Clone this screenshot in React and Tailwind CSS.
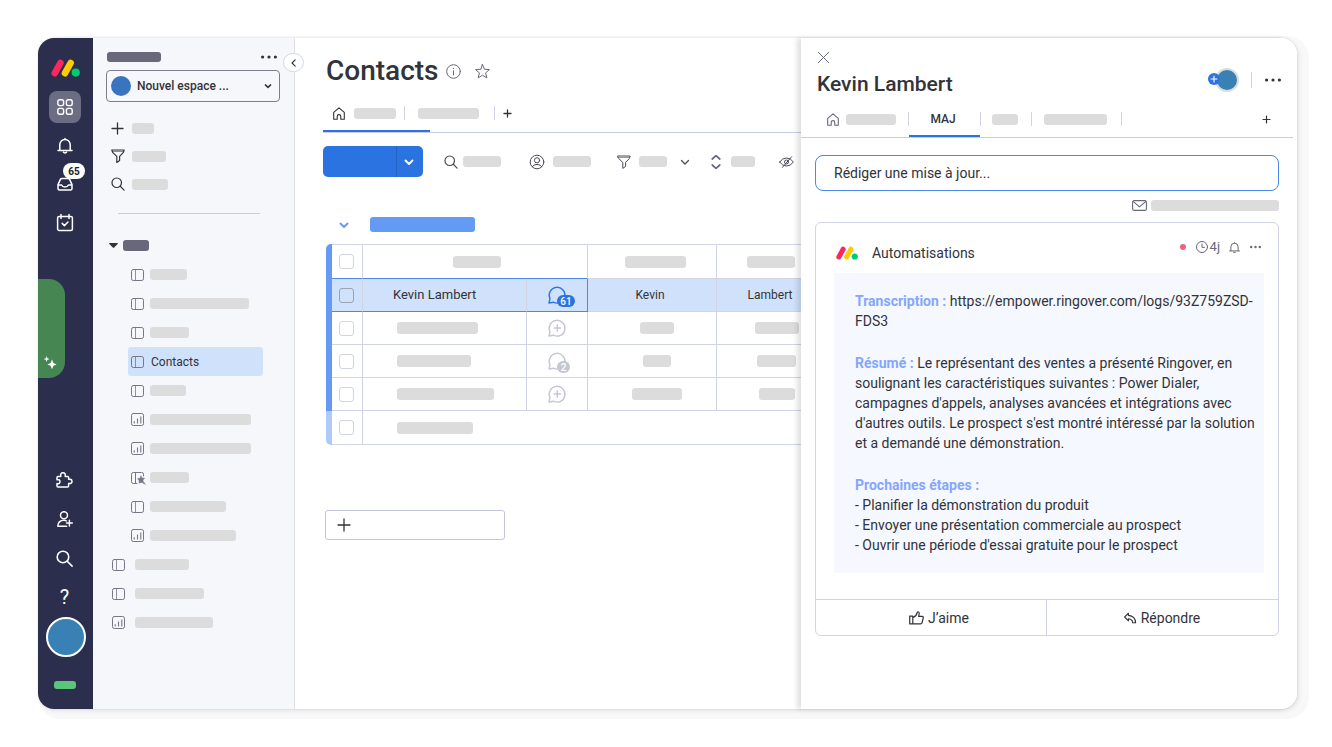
import React, { useState } from "react";
import clsx from "clsx";

// Base for every line icon, paths are drawn in real pixels
const Icon = ({ w = 16, h = 16, stroke = 1.3, className, children }) => (
  <svg
    width={w}
    height={h}
    viewBox={`0 0 ${w} ${h}`}
    fill="none"
    stroke="currentColor"
    strokeWidth={stroke}
    strokeLinecap="round"
    strokeLinejoin="round"
    aria-hidden="true"
    className={clsx("shrink-0 overflow-visible", className)}
  >
    {children}
  </svg>
);

const Logo = ({ className }) => (
  <svg viewBox="0 0 29 18" fill="none" strokeLinecap="round" strokeWidth="6.6" aria-hidden="true" className={className}>
    <path d="M3.8 14.2 9.4 4" stroke="#fb275d" />
    <path d="M14 14.2 19.6 4" stroke="#ffcc00" />
    <circle cx="24.7" cy="13.6" r="4.1" fill="#00ca72" />
  </svg>
);

const PlusIcon = ({ size = 13, stroke = 1.3 }) => (
  <Icon w={size} h={size} stroke={stroke}>
    <path d={`M${size / 2} 1V${size - 1}M1 ${size / 2}H${size - 1}`} />
  </Icon>
);

const SearchIcon = ({ size = 14, stroke = 1.2 }) => (
  <Icon w={size} h={size} stroke={stroke}>
    <circle cx={size * 0.41} cy={size * 0.41} r={size * 0.34} />
    <path d={`M${size * 0.66} ${size * 0.66} ${size - 0.9} ${size - 0.9}`} />
  </Icon>
);

const FilterIcon = ({ stroke = 1.3 }) => (
  <Icon w={14} h={14} stroke={stroke}>
    <path d="M.8 1H13.2L12.4 3.4 8.6 7.4V11.4L5.8 13.4V7.4L1.6 3.4Z" />
    <path d="M1.4 2.4H12.6" strokeWidth=".6" />
  </Icon>
);

const ChevronDown = ({ stroke = 1.5 }) => (
  <Icon w={10} h={10} stroke={stroke}>
    <path d="M1.5 3.5 5 7 8.5 3.5" />
  </Icon>
);

const HomeIcon = ({ className }) => (
  <Icon w={12} h={13} stroke={1.1} className={className}>
    <path d="M.7 5.4 6 .8 11.3 5.4V12.2H7.8V9.4A1.8 1.8 0 0 0 4.2 9.4V12.2H.7Z" />
  </Icon>
);

const BellIcon = () => (
  <Icon stroke={1.5}>
    <path d="M1 12.4H15M2.8 12.4V6.6A5.2 5.2 0 0 1 13.2 6.6V12.4M6.4 14.2A1.8 1.4 0 0 0 9.6 14.2M8 1.2V.6" />
  </Icon>
);

const InboxIcon = () => (
  <Icon h={14} stroke={1.5}>
    <path d="M1 7.6 3.4 2.4Q3.8 1.5 4.8 1.5H11.2Q12.2 1.5 12.6 2.4L15 7.6V11.5Q15 13 13.5 13H2.5Q1 13 1 11.5ZM1 8H4.6Q5.4 10 8 10T11.4 8H15" />
  </Icon>
);

const CalendarIcon = () => (
  <Icon h={17} stroke={1.5}>
    <rect x=".6" y="2.6" width="14.8" height="13.8" rx="1.5" />
    <path d="M4 .6V4.4M12 .6V4.4M5.2 9.4 7.4 11.6 11 8" />
  </Icon>
);

const PuzzleIcon = () => (
  <Icon w={17} stroke={1.5}>
    <path d="M1 5.6Q1 4.6 2 4.6H4.8C4.3 2 5.2.8 7 .8S9.7 2 9.2 4.6H11.6Q12.6 4.6 12.6 5.6V7.3C14.4 6.8 16 7.6 16 9.4S14.4 11.9 12.6 11.4V14Q12.6 15 11.6 15H2Q1 15 1 14V11.6C3 12 4 11 4 9.6S3 7.3 1 7.8Z" />
  </Icon>
);

const InviteIcon = () => (
  <Icon stroke={1.5}>
    <circle cx="7" cy="4.3" r="3.5" />
    <path d="M9.4 9.8Q8.4 9.3 7 9.3C3 9.3.8 11.6.8 15.2H9.6M12.4 9.2V15M9.5 12.1H15.3" />
  </Icon>
);

const BoardIcon = () => (
  <Icon w={13} h={12} stroke={1}>
    <rect x=".5" y=".5" width="12" height="11" rx="1.8" />
    <path d="M4.5.5V11.5" strokeWidth=".8" />
  </Icon>
);

const ChartIcon = () => (
  <Icon w={13} h={13} stroke={1}>
    <rect x=".5" y=".5" width="12" height="12" rx="1.8" />
    <path d="M3.2 8.2V10.4M6.5 5.5V10.4M9.8 3.4V10.4" strokeWidth="1.1" strokeLinecap="butt" />
  </Icon>
);

const MagicBoardIcon = () => (
  <Icon w={13} h={12} stroke={1}>
    <path d="M6 11.5H2.3A1.8 1.8 0 0 1 .5 9.7V2.3A1.8 1.8 0 0 1 2.3.5H10.7A1.8 1.8 0 0 1 12.5 2.3V4M4.5.5V11.5" />
    <path d="M10 4 11 6 13.6 6.2 12 8 12.2 9.6 14.4 12.4 11 10.4 8 11 8.2 8.4 6.4 6.8 8.8 6.2Z" fill="currentColor" strokeWidth=".5" />
  </Icon>
);

const DotsIcon = ({ w = 16, r = 1.6 }) => (
  <svg width={w} height="4" viewBox={`0 0 ${w} 4`} fill="currentColor" aria-hidden="true" className="shrink-0">
    <circle cx={r} cy="2" r={r} />
    <circle cx={w / 2} cy="2" r={r} />
    <circle cx={w - r} cy="2" r={r} />
  </svg>
);

// Speech bubble of the updates column
const BubbleIcon = ({ plus }) => (
  <Icon w={18} h={18} stroke={1.4}>
    <path d="M1 17 2 12.7A7.9 7.9 0 1 1 5.4 16.2L1 17Z" />
    {plus && <path d="M9.3 5.8V12.2M6.1 9H12.5" />}
  </Icon>
);

const Bar = ({ className, color = "bg-[#dcdcdc]" }) => (
  <span className={clsx("block shrink-0 rounded-[3px]", color, className)} />
);

const Separator = ({ className, height = "h-[14px]" }) => (
  <span className={clsx("w-px shrink-0 bg-[#d0d4e4]", height, className)} />
);

const RailButton = ({ label, children, className }) => (
  <button
    type="button"
    aria-label={label}
    className={clsx("relative flex h-[38px] w-full items-center justify-center pr-0.5", className)}
  >
    {children}
  </button>
);

const Rail = () => (
  <nav className="flex w-[55px] shrink-0 flex-col items-center rounded-l-2xl bg-[#2b2e4c] pt-[21px] pb-5 text-white">
    <Logo className="h-[18px] w-[29px]" />
    <button
      type="button"
      aria-label="Espaces"
      className="mt-[14px] mr-0.5 flex h-8 w-8 items-center justify-center rounded-lg bg-[#6b6d82]"
    >
      <Icon stroke={1.4}>
        <rect x=".8" y=".8" width="5.8" height="5.8" rx="1.8" />
        <rect x="9.4" y=".8" width="5.8" height="5.8" rx="1.8" />
        <rect x=".8" y="9.4" width="5.8" height="5.8" rx="1.8" />
        <rect x="9.4" y="9.4" width="5.8" height="5.8" rx="1.8" />
      </Icon>
    </button>
    <div className="mt-1 w-full">
      <RailButton label="Notifications">
        <BellIcon />
      </RailButton>
      <RailButton label="Boîte de réception">
        <InboxIcon />
        <span className="absolute -top-0.5 right-2 flex h-4 w-[22px] items-center justify-center rounded-full bg-white text-[10px] font-bold text-[#222]">
          65
        </span>
      </RailButton>
      <RailButton label="Mon travail">
        <CalendarIcon />
      </RailButton>
    </div>
    <button
      type="button"
      aria-label="Assistant"
      className="mt-[38px] flex h-[99px] w-[27px] items-end justify-center self-start rounded-r-2xl bg-[#468653] pr-1 pb-2"
    >
      <svg width="14" height="14" viewBox="0 0 14 14" fill="white" aria-hidden="true" className="shrink-0">
        <path d="M3.6 0 4.4 2.2 6.6 3 4.4 3.8 3.6 6 2.8 3.8.6 3 2.8 2.2ZM9 3.6 10.4 7 13.6 8.4 10.4 9.8 9 13.2 7.6 9.8 4.4 8.4 7.6 7Z" />
      </svg>
    </button>
    <div className="mt-auto flex w-full flex-col gap-px">
      <RailButton label="Applications">
        <PuzzleIcon />
      </RailButton>
      <RailButton label="Inviter">
        <InviteIcon />
      </RailButton>
      <RailButton label="Rechercher">
        <SearchIcon size={17} stroke={1.6} />
      </RailButton>
      <RailButton label="Aide" className="text-xl">
        ?
      </RailButton>
    </div>
    <button type="button" aria-label="Profil" className="mt-px h-10 w-10 rounded-full border-2 border-white bg-[#3980b5]" />
    <span className="mt-6 mr-0.5 h-2 w-[22px] rounded-[3px] bg-[#5bc57b]" />
  </nav>
);

const boards = [
  { icon: BoardIcon, width: "w-[37px]" },
  { icon: BoardIcon, width: "w-[99px]" },
  { icon: BoardIcon, width: "w-[39px]" },
  { icon: BoardIcon, name: "Contacts" },
  { icon: BoardIcon, width: "w-[36px]" },
  { icon: ChartIcon, width: "w-[101px]" },
  { icon: ChartIcon, width: "w-[101px]" },
  { icon: MagicBoardIcon, width: "w-[39px]" },
  { icon: BoardIcon, width: "w-[76px]" },
  { icon: ChartIcon, width: "w-[86px]" },
];

const rootBoards = [
  { icon: BoardIcon, width: "w-[54px]" },
  { icon: BoardIcon, width: "w-[69px]" },
  { icon: ChartIcon, width: "w-[78px]" },
];

const Sidebar = () => (
  <aside className="relative w-[202px] shrink-0 border-r border-[#e0e1e8] bg-[#f5f7fb] px-[14px] pt-3">
    <div className="flex h-[14px] items-center justify-between pr-[3px] text-[#323338]">
      <Bar className="h-[10px] w-[54px]" color="bg-[#676879]" />
      <button type="button" aria-label="Options" className="flex">
        <DotsIcon />
      </button>
    </div>
    <button
      type="button"
      aria-label="Réduire"
      className="absolute top-[15px] -right-[10px] z-10 flex h-[19px] w-[21px] items-center justify-center rounded-full border border-[#d5d8e6] bg-white text-[#323338]"
    >
      <Icon w={6} h={8} stroke={1.1}>
        <path d="M4.2.8 1 4 4.2 7.2" />
      </Icon>
    </button>
    <div className="mt-[6px] -ml-px flex h-8 items-center rounded border border-[#7c7e8e] pr-[6px] pl-1 text-[#323338]">
      <span className="h-5 w-5 shrink-0 rounded-full bg-[#3975bf]" />
      <select
        aria-label="Espace de travail"
        className="h-full min-w-0 flex-1 appearance-none bg-transparent pl-[6px] text-xs font-medium"
      >
        <option>Nouvel espace ...</option>
      </select>
      <Icon w={10} h={10} stroke={1.5}>
        <path d="M2.4 3.9 5 6.4 7.6 3.9" />
      </Icon>
    </div>

    <div className="mt-3 pl-1 text-[#323338]">
      <button type="button" aria-label="Ajouter" className="flex h-7 items-center gap-2">
        <PlusIcon />
        <Bar className="h-[11px] w-[22px]" />
      </button>
      <button type="button" aria-label="Filtrer" className="flex h-7 items-center gap-[7px]">
        <FilterIcon stroke={1.2} />
        <Bar className="h-[11px] w-[34px]" />
      </button>
      <button type="button" aria-label="Rechercher un tableau" className="flex h-7 items-center gap-[7px]">
        <SearchIcon />
        <Bar className="h-[11px] w-[36px]" />
      </button>
    </div>
    <hr className="mt-[15px] mr-5 ml-[11px] border-[#cbcdd2]" />

    <button type="button" aria-label="Dossier" className="mt-6 ml-0.5 flex h-[14px] items-center gap-[5px] text-[#323338]">
      <svg width="9" height="5" viewBox="0 0 9 5" fill="currentColor" aria-hidden="true">
        <path d="M.6 0H8.4Q9.2.3 8.6 1L5.2 4.4Q4.5 5 3.8 4.4L.4 1Q-.2.3.6 0Z" />
      </svg>
      <Bar className="h-[11px] w-[26px]" color="bg-[#676879]" />
    </button>
    <ul className="mt-2 pl-[21px] text-[#757686]">
      {boards.map(({ icon: BoardTypeIcon, width, name }, i) => (
        <li key={i}>
          <a
            href="#board"
            aria-label={name ? undefined : "Tableau"}
            className={clsx(
              "flex h-[29px] w-[135px] items-center gap-[6px] rounded-[3px] pl-[3px]",
              name && "bg-[#d0e2fb]"
            )}
          >
            <BoardTypeIcon />
            {name ? (
              <span className="pl-px text-xs text-[#323338]">{name}</span>
            ) : (
              <Bar className={clsx("h-[11px]", width)} />
            )}
          </a>
        </li>
      ))}
    </ul>
    <ul className="pl-[5px] text-[#757686]">
      {rootBoards.map(({ icon: BoardTypeIcon, width }, i) => (
        <li key={i}>
          <a href="#board" aria-label="Tableau" className="flex h-[29px] items-center gap-[10px]">
            <BoardTypeIcon />
            <Bar className={clsx("h-[11px]", width)} />
          </a>
        </li>
      ))}
    </ul>
  </aside>
);

const Toolbar = () => (
  <div className="mt-[13px] flex h-[31px] items-center text-[#4a4b57]">
    <div className="flex h-full w-[100px] shrink-0 overflow-hidden rounded-[5px] bg-[#2c73e2] text-white">
      <button type="button" aria-label="Nouvel élément" className="flex-1" />
      <button
        type="button"
        aria-label="Plus de choix"
        className="flex w-[27px] items-center justify-center border-l border-[#2561c0] pr-0.5"
      >
        <ChevronDown stroke={1.8} />
      </button>
    </div>
    <button type="button" aria-label="Rechercher un contact" className="ml-[21px] flex items-center gap-[5px]">
      <SearchIcon />
      <Bar className="h-[11px] w-[38px]" />
    </button>
    <button type="button" aria-label="Personne" className="ml-7 flex items-center gap-2">
      <Icon stroke={1}>
        <circle cx="8" cy="8" r="6.8" />
        <circle cx="8" cy="6.3" r="2.6" />
        <path d="M3.2 12.8Q4.4 10.4 8 10.4T12.8 12.8" />
      </Icon>
      <Bar className="h-[11px] w-[38px]" />
    </button>
    <button type="button" aria-label="Filtre" className="ml-[26px] flex items-center gap-2">
      <FilterIcon stroke={1} />
      <Bar className="h-[11px] w-[28px]" />
    </button>
    <button type="button" aria-label="Options de filtre" className="ml-[13px]">
      <ChevronDown stroke={1.3} />
    </button>
    <button type="button" aria-label="Trier" className="ml-5 flex items-center gap-[9px]">
      <Icon w={12} stroke={1.7} className="text-[#676879]">
        <path d="M2.2 5 6 1.6 9.8 5M2.2 11 6 14.4 9.8 11" />
      </Icon>
      <Bar className="h-[11px] w-6" />
    </button>
    <button type="button" aria-label="Masquer" className="ml-6">
      <Icon w={15} h={12} stroke={1}>
        <path d="M.6 6Q3.4 2 7.5 2T14.4 6Q11.6 10 7.5 10T.6 6ZM3.4 11.4 12.6.8" />
        <circle cx="7.5" cy="6" r="2" />
      </Icon>
    </button>
  </div>
);

const rows = [
  { name: "Kevin Lambert", first: "Kevin", last: "Lambert", updates: "61", selected: true },
  { bars: ["w-[81px]", "w-[34px]", "w-[44px]"] },
  { bars: ["w-[74px]", "w-[28px]", "w-[39px]"], updates: "2" },
  { bars: ["w-[97px]", "w-[50px]", "w-[36px]"] },
];

const CheckCell = ({ label, selected, blue }) => (
  <td
    className={clsx(
      "border-r border-b border-r-[#d0d4e4] pr-px",
      blue ? "border-b-[#4b88ea]" : "border-b-[#d0d4e4]"
    )}
  >
    <input
      type="checkbox"
      aria-label={label}
      className={clsx(
        "mx-auto block h-[15px] w-[15px] appearance-none rounded-[3px] border",
        selected ? "border-[#9aa3b5]" : "border-[#d0d4e4] bg-white"
      )}
    />
  </td>
);

const ContactsTable = () => (
  <div className="mt-2 ml-[3px] flex">
    <div className="flex w-[6px] shrink-0 flex-col overflow-hidden rounded-l-[5px]">
      <span className="flex-1 bg-[#659af4]" />
      <span className="h-[34px] bg-[#aecafa]" />
    </div>
    <table className="w-[492px] shrink-0 table-fixed border-separate border-spacing-0 border-t border-[#d0d4e4] text-[13px] text-[#323338]">
      <colgroup>
        <col className="w-[31px]" />
        <col className="w-[164px]" />
        <col className="w-[61px]" />
        <col className="w-[129px]" />
        <col className="w-[107px]" />
      </colgroup>
      <tbody>
        <tr className="h-[34px]">
          <CheckCell label="Tout sélectionner" blue />
          <th
            colSpan={2}
            aria-label="Contact"
            className="border-r border-b border-r-[#d0d4e4] border-b-[#4b88ea] pl-1"
          >
            <Bar className="mx-auto h-3 w-[48px]" />
          </th>
          <th aria-label="Prénom" className="border-r border-b border-[#d0d4e4] pl-[6px]">
            <Bar className="mx-auto h-3 w-[61px]" />
          </th>
          <th aria-label="Nom" className="border-b border-[#d0d4e4]">
            <Bar className="mx-auto h-3 w-[48px]" />
          </th>
        </tr>
        {rows.map((row, i) => (
          <tr key={i} className={clsx("h-[33px]", row.selected && "bg-[#d0e2fb]")}>
            <CheckCell label={row.name || "Contact"} selected={row.selected} blue={row.selected} />
            <td
              className={clsx(
                "border-r border-b border-r-[#d0d4e4]",
                row.selected ? "border-b-[#4b88ea] pl-[30px]" : "border-b-[#d0d4e4] pl-[34px]"
              )}
            >
              {row.name || <Bar className={clsx("h-3", row.bars[0])} />}
            </td>
            <td className={clsx("border-r border-b", row.selected ? "border-[#4b88ea]" : "border-[#d0d4e4]")}>
              <button
                type="button"
                aria-label="Mises à jour"
                className={clsx(
                  "relative mx-auto block w-[18px]",
                  row.selected ? "text-[#2c73e2]" : "text-[#c5c7d0]"
                )}
              >
                <BubbleIcon plus={!row.updates} />
                {row.updates && (
                  <span
                    className={clsx(
                      "absolute top-[9px] left-[9px] flex h-3 items-center justify-center rounded-full text-[10px] font-medium text-white",
                      row.selected ? "w-[18px] bg-[#2c73e2]" : "w-[13px] bg-[#c5c7d0]"
                    )}
                  >
                    {row.updates}
                  </span>
                )}
              </button>
            </td>
            <td
              className={clsx(
                "border-r border-b border-[#d0d4e4] text-center text-xs",
                row.selected ? "pr-1" : "pl-[10px]"
              )}
            >
              {row.first || <Bar className={clsx("mx-auto h-3", row.bars[1])} />}
            </td>
            <td className={clsx("border-b border-[#d0d4e4] text-center text-xs", row.selected ? "pr-px" : "pl-3")}>
              {row.last || <Bar className={clsx("mx-auto h-3", row.bars[2])} />}
            </td>
          </tr>
        ))}
        <tr className="h-[34px]">
          <CheckCell label="Ajouter un contact" />
          <td colSpan={4} className="border-b border-[#d0d4e4] pl-[34px]">
            <Bar className="h-3 w-[76px]" />
          </td>
        </tr>
      </tbody>
    </table>
  </div>
);

const Board = () => (
  <main className="min-w-0 flex-1 overflow-hidden bg-white pt-3 pl-7 text-[#323338]">
    <div className="flex h-[42px] items-center pl-[3px]">
      <h1 className="text-[28px] font-medium">Contacts</h1>
      <button type="button" aria-label="Informations" className="ml-[7px] text-[#676879]">
        <Icon w={15} h={15} stroke={1}>
          <circle cx="7.5" cy="7.5" r="6.8" />
          <path d="M7.5 6.7V10.9M7.5 4.3V4.6" />
        </Icon>
      </button>
      <button type="button" aria-label="Favori" className="ml-[14px] text-[#676879]">
        <Icon w={15} h={15} stroke={1}>
          <path d="M7.5.6 9.4 5.2 14.4 5.6 10.6 8.9 11.8 13.9 7.5 11.2 3.2 13.9 4.4 8.9.6 5.6 5.6 5.2Z" />
        </Icon>
      </button>
    </div>
    <div className="relative mt-0.5 flex h-[39px] items-center border-b border-[#c8cde2]">
      <button type="button" aria-label="Tableau principal" className="flex items-center gap-[9px] pl-[10px]">
        <HomeIcon />
        <Bar className="h-[11px] w-[42px]" />
      </button>
      <Separator className="ml-2" />
      <button type="button" aria-label="Vue" className="ml-[13px]">
        <Bar className="h-[11px] w-[61px]" />
      </button>
      <Separator className="ml-[15px]" />
      <button type="button" aria-label="Ajouter une vue" className="ml-2">
        <PlusIcon size={9} />
      </button>
      <span className="absolute bottom-0 left-0 h-[2px] w-[107px] bg-[#2c73e2]" />
    </div>
    <Toolbar />
    <div className="mt-[35px] flex h-6 items-center pl-4">
      <button type="button" aria-label="Réduire le groupe" className="pt-0.5 text-[#659af4]">
        <ChevronDown stroke={1.9} />
      </button>
      <Bar className="ml-[21px] h-[15px] w-[105px]" color="bg-[#659af4]" />
    </div>
    <ContactsTable />
    <button
      type="button"
      aria-label="Ajouter un groupe"
      className="mt-[65px] ml-0.5 flex h-[30px] w-[180px] items-center rounded-[3px] border border-[#c3c6d4] pl-[11px]"
    >
      <PlusIcon size={14} />
    </button>
  </main>
);

const PanelHeader = () => (
  <header className="pt-3 pl-4">
    <button type="button" aria-label="Fermer" className="flex h-[14px] items-center text-[#676879]">
      <Icon w={13} h={13} stroke={1}>
        <path d="M1.2 1.2 11.8 11.8M11.8 1.2 1.2 11.8" />
      </Icon>
    </button>
    <div className="mt-1 flex h-[33px] justify-between pr-4">
      <h2 className="text-[21px] leading-[33px] font-medium">Kevin Lambert</h2>
      <div className="flex h-6 items-center">
        <button
          type="button"
          aria-label="Abonnés"
          className="relative h-6 w-6 rounded-full border-2 border-[#dcdcdc] bg-[#3980b5]"
        >
          <span className="absolute top-[3px] -left-[9px] flex h-3 w-3 items-center justify-center rounded-full bg-[#2c73e2] text-white">
            <PlusIcon size={8} stroke={1.1} />
          </span>
        </button>
        <Separator className="ml-3" height="h-4" />
        <button type="button" aria-label="Autres actions" className="ml-[13px] flex">
          <DotsIcon />
        </button>
      </div>
    </div>
  </header>
);

const PanelTabs = () => (
  <div className="mr-1 flex h-[37px] items-center border-b border-[#c8cde2] pl-[26px]">
    <button type="button" aria-label="Accueil" className="flex items-center gap-[7px]">
      <HomeIcon className="text-[#676879]" />
      <Bar className="h-[11px] w-[50px]" />
    </button>
    <Separator className="ml-3" />
    <button type="button" className="relative flex h-full w-[71px] items-center justify-center pr-[3px] text-xs font-medium">
      MAJ
      <span className="absolute inset-x-0 bottom-0 h-[2px] bg-[#2c73e2]" />
    </button>
    <Separator />
    <button type="button" aria-label="Fichiers" className="ml-[11px]">
      <Bar className="h-[11px] w-[26px]" />
    </button>
    <Separator className="ml-[13px]" />
    <button type="button" aria-label="Journal d'activité" className="ml-3">
      <Bar className="h-[11px] w-[63px]" />
    </button>
    <Separator className="ml-[14px]" />
    <button type="button" aria-label="Ajouter un onglet" className="mr-[22px] ml-auto">
      <PlusIcon size={9} stroke={1.2} />
    </button>
  </div>
);

const UpdateCard = () => (
  <article className="mt-[10px] rounded-md border border-[#d0d4e4]">
    <div className="flex h-[50px] items-start justify-between pt-[17px] pr-[17px] pl-5">
      <div className="mt-[3px] flex h-5 items-center gap-[14px]">
        <Logo className="h-[14px] w-[22px]" />
        <h3 className="text-sm">Automatisations</h3>
      </div>
      <div className="flex h-[14px] items-center text-[#676879]">
        <span className="h-[6px] w-[6px] rounded-full bg-[#ea647d]" />
        <Icon w={12} h={12} stroke={1} className="ml-[10px]">
          <circle cx="6" cy="6" r="5.5" />
          <path d="M6 3V6.4H8.4" />
        </Icon>
        <span className="ml-0.5 text-[13px]">4j</span>
        <button type="button" aria-label="Rappel" className="ml-[9px]">
          <Icon w={11} h={11} stroke={1}>
            <path d="M.6 8.9H10.4M1.9 8.9V4.8A3.6 3.6 0 0 1 9.1 4.8V8.9M4.6 10.3H6.4M5.5 1V.6" />
          </Icon>
        </button>
        <button type="button" aria-label="Plus" className="ml-[10px] flex">
          <DotsIcon w={11} r={1.2} />
        </button>
      </div>
    </div>
    <div className="mr-[14px] mb-[26px] ml-[18px] flex flex-col gap-[22px] bg-[#f5f8ff] py-[18px] pr-2 pl-[21px] text-sm leading-5">
      <p>
        <strong className="font-bold text-[#85a6fb]">Transcription :</strong>{" "}
        https://empower.ringover.com/logs/93Z759ZSD-FDS3
      </p>
      <p>
        <strong className="font-bold text-[#85a6fb]">Résumé :</strong> Le représentant des ventes a présenté Ringover,
        en soulignant les caractéristiques suivantes : Power Dialer, campagnes d'appels, analyses avancées et
        intégrations avec d'autres outils. Le prospect s'est montré intéressé par la solution et a demandé une
        démonstration.
      </p>
      <div>
        <strong className="font-bold text-[#85a6fb]">Prochaines étapes :</strong>
        <ul>
          <li>- Planifier la démonstration du produit</li>
          <li>- Envoyer une présentation commerciale au prospect</li>
          <li>- Ouvrir une période d'essai gratuite pour le prospect</li>
        </ul>
      </div>
    </div>
    <footer className="grid h-9 grid-cols-2 border-t border-[#d0d4e4] text-sm">
      <button type="button" className="flex items-center justify-center gap-1 border-r border-[#d0d4e4] pl-4">
        <Icon w={15} h={14} stroke={1.2}>
          <path d="M.7 5.2H3.8V12.8H.7ZM3.8 6.6Q7.4 5.4 8.2 1.6 8.6.6 9.6 1 10.8 1.6 9.6 5.4H13.2Q14.6 5.6 14.2 7L13 11.8Q12.8 12.8 11.6 12.8H3.8" />
        </Icon>
        J’aime
      </button>
      <button type="button" className="flex items-center justify-center gap-[5px] pr-px">
        <Icon w={12} h={12} stroke={1.1}>
          <path d="M4.4 1.2 .6 5 4.4 8.8V6.8Q6.6 6.8 8.2 8.6L8.6 10.8H11.6Q11.4 4.2 4.4 3.4Z" />
        </Icon>
        Répondre
      </button>
    </footer>
  </article>
);

const UpdatesPanel = () => {
  const [message, setMessage] = useState("");

  return (
    <section className="relative w-[496px] shrink-0 rounded-r-2xl bg-white text-[#323338] shadow-[-4px_0_5px_rgba(0,0,0,0.12)]">
      <PanelHeader />
      <PanelTabs />
      <div className="mt-[17px] pr-[18px] pl-[14px]">
        <input
          type="text"
          aria-label="Rédiger une mise à jour"
          value={message}
          onChange={(e) => setMessage(e.target.value)}
          placeholder="Rédiger une mise à jour..."
          className="block h-9 w-full rounded-lg border border-[#4b88ea] px-[18px] text-sm placeholder:text-[#323338]"
        />
        <div className="mt-2 flex h-[13px] items-center justify-end gap-1">
          <Icon w={15} h={11} stroke={1.1} className="text-[#676879]">
            <rect x=".6" y=".6" width="13.8" height="9.8" rx="1.5" />
            <path d="M1.4 1.6 7.5 6.8 13.6 1.6" />
          </Icon>
          <Bar className="h-[11px] w-32" />
        </div>
        <UpdateCard />
      </div>
    </section>
  );
};

const App = () => (
  <div className="flex min-h-screen bg-white py-[38px] pr-[35px] pl-[38px] font-['Roboto',sans-serif]">
    <div className="flex min-w-0 flex-1 rounded-2xl shadow-[0_0_2px_rgba(0,0,0,0.12),2px_2px_4px_rgba(0,0,0,0.08),6px_4px_0_6px_#f8f8f8]">
      <Rail />
      <Sidebar />
      <Board />
      <UpdatesPanel />
    </div>
  </div>
);

export default App;
